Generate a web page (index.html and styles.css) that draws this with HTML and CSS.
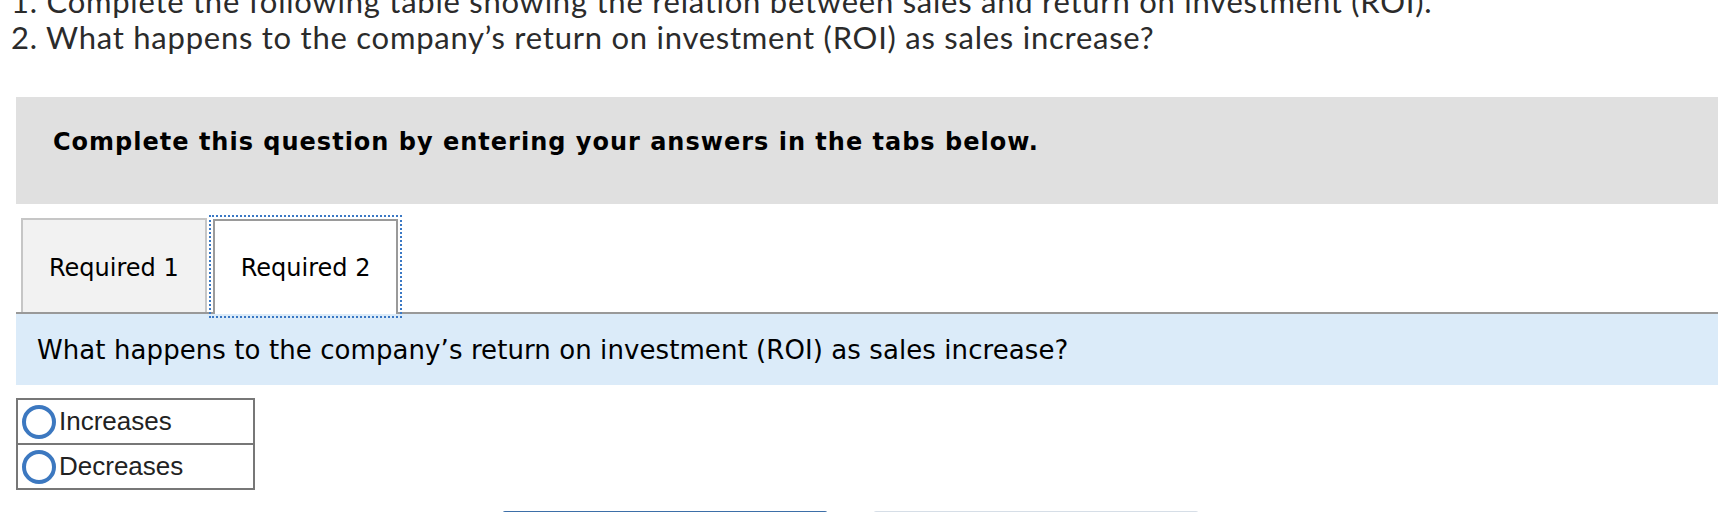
FILE: index.html
```html
<!DOCTYPE html>
<html lang="en">
<head>
<meta charset="utf-8">
<title>Required 2</title>
<link rel="stylesheet" href="styles.css">
</head>
<body>
<div class="intro">
  <p class="intro-line">1. Complete the following table showing the relation between sales and return on investment (ROI).</p>
  <p class="intro-line">2. What happens to the company’s return on investment (ROI) as sales increase?</p>
</div>

<div class="instructions">
  <p class="instructions-text">Complete this question by entering your answers in the tabs below.</p>
</div>

<div class="tabs">
  <div class="tab">Required 1</div>
  <div class="tab tab-active">Required 2</div>
</div>

<div class="question">
  <p class="question-text">What happens to the company’s return on investment (ROI) as sales increase?</p>
</div>

<div class="choices">
  <label class="choice">
    <span class="radio"></span>
    <span class="choice-text">Increases</span>
  </label>
  <label class="choice">
    <span class="radio"></span>
    <span class="choice-text">Decreases</span>
  </label>
</div>

<div class="nav">
  <button class="nav-btn nav-prev"></button>
  <button class="nav-btn nav-next"></button>
</div>
</body>
</html>
```

FILE: styles.css
```css
html, body {
  margin: 0;
  padding: 0;
  background: #ffffff;
}

body {
  overflow: hidden;
}

.intro {
  margin-top: -17px;
  padding-left: 11px;
  font-family: "Lato", "Liberation Sans", sans-serif;
  font-size: 31px;
  letter-spacing: 0.75px;
  line-height: 36px;
  color: #2b2b2b;
}

.intro-line {
  margin: 0;
  white-space: nowrap;
}

.instructions {
  margin: 42px 16px 0;
  height: 107px;
  box-sizing: border-box;
  padding: 31px 37px 0;
  background: #e0e0e0;
}

.instructions-text {
  margin: 0;
  font-family: "DejaVu Sans", Verdana, sans-serif;
  font-weight: bold;
  font-size: 24px;
  letter-spacing: 1px;
  line-height: 28px;
  color: #000;
}

.tabs {
  margin: 14px 16px 0;
  padding-left: 5px;
  display: flex;
  align-items: flex-end;
  gap: 6px;
  border-bottom: 2px solid #999999;
}

.tab {
  height: 94px;
  box-sizing: border-box;
  padding: 3px 26px 0;
  display: flex;
  align-items: center;
  background: #f2f2f2;
  border: 2px solid #c6c6c6;
  border-bottom: none;
  font-family: "DejaVu Sans", Verdana, sans-serif;
  font-size: 24px;
  color: #000;
}

.tab-active {
  height: 95px;
  padding-top: 0;
  margin-bottom: -2px;
  background: #ffffff;
  border-color: #9a9a9a;
  outline: 2px dotted #3a78c4;
  outline-offset: 2px;
}

.question {
  margin: 0 16px;
  height: 71px;
  box-sizing: border-box;
  padding-left: 21px;
  display: flex;
  align-items: center;
  background: #dbebf9;
}

.question-text {
  margin: 0;
  font-family: "DejaVu Sans", Verdana, sans-serif;
  font-size: 26px;
  letter-spacing: 0.08px;
  color: #000;
}

.choices {
  margin: 13px 16px 0;
  width: 239px;
  box-sizing: border-box;
  border: 2px solid #777777;
}

.choice {
  height: 43px;
  padding-left: 4px;
  display: flex;
  align-items: center;
  gap: 3px;
}

.choice + .choice {
  border-top: 2px solid #777777;
}

.radio {
  width: 34px;
  height: 34px;
  box-sizing: border-box;
  border: 4px solid #3c78c0;
  border-radius: 50%;
  flex: none;
}

.choice-text {
  font-family: "Liberation Sans", Arial, sans-serif;
  font-size: 26px;
  color: #222222;
}

.nav {
  margin: 21px 0 0 502px;
  display: flex;
  gap: 45px;
}

.nav-btn {
  width: 326px;
  height: 44px;
  border-radius: 3px;
}

.nav-prev {
  background: #3d6fa8;
  border: 1px solid #3d6fa8;
}

.nav-next {
  background: #f4f7fa;
  border: 1px solid #d6dee7;
}
```
